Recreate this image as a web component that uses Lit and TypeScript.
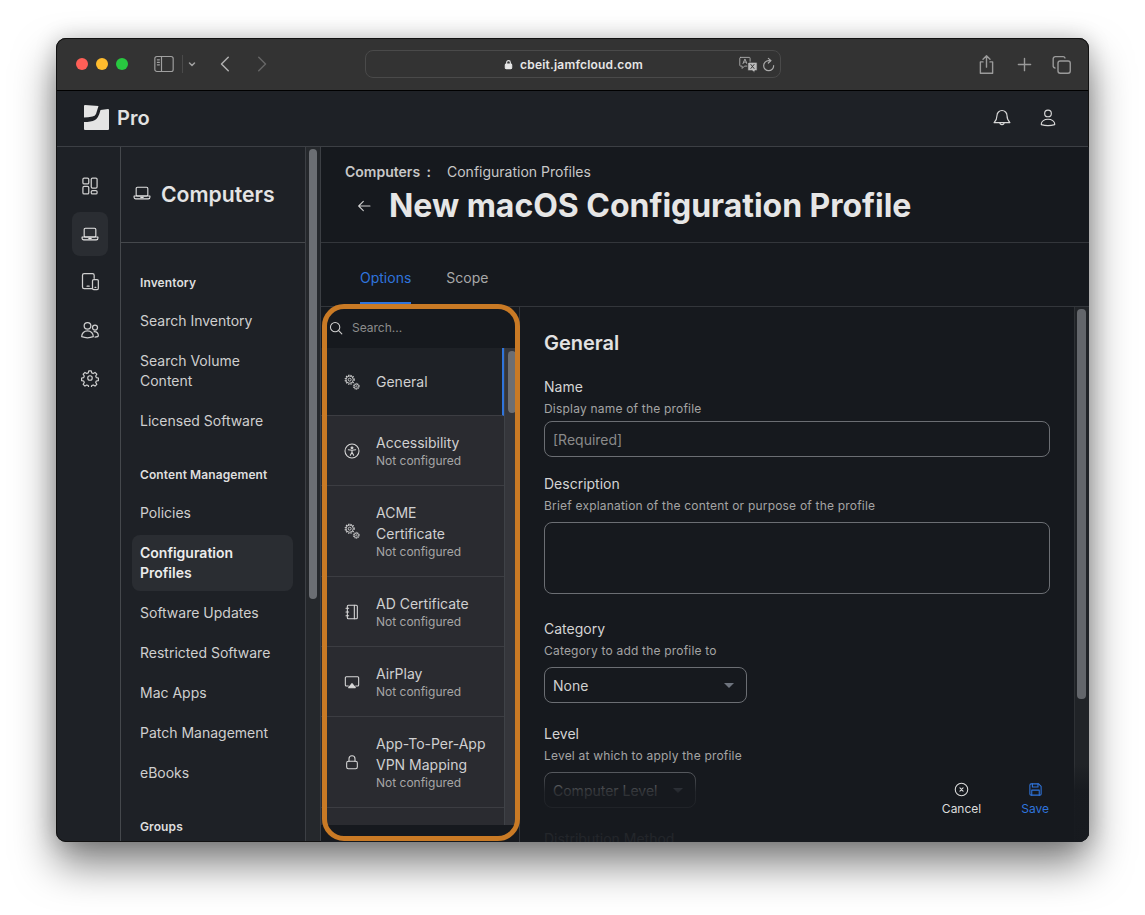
import { LitElement, html, css, svg } from "lit";
import { customElement } from "lit/decorators.js";

const ic = (body: unknown, size = 20, vb = 24, sw = 1.5) =>
  html`<svg width=${size} height=${size} viewBox="0 0 ${vb} ${vb}" fill="none" stroke="currentColor" stroke-width=${sw} stroke-linecap="round" stroke-linejoin="round">${body}</svg>`;

const laptop = svg`<rect x="5" y="5" width="14" height="10.5" rx="1.5"/><path d="M2.5 15.5h19v1.5a2 2 0 0 1-2 2h-15a2 2 0 0 1-2-2z"/><path d="M10.5 17.2h3"/>`;
const gears = svg`<g stroke-linecap="butt"><circle cx="8.500" cy="8.500" r="6.800" stroke-dasharray="2 1.600" stroke-width="1.600"/><circle cx="8.500" cy="8.500" r="5.400" stroke-width="1.300"/><circle cx="8.500" cy="8.500" r="2.200" stroke-width="1.300"/><circle cx="18.500" cy="18.500" r="4.500" stroke-dasharray="1.600 1.200" stroke-width="1.400"/><circle cx="18.500" cy="18.500" r="3.300" stroke-width="1.200"/><circle cx="18.500" cy="18.500" r="1" stroke-width="1"/></g>`;
const access = svg`<circle cx="12" cy="12" r="10.500"/><circle cx="12" cy="7.3" r="1.4" fill="currentColor"/><path d="M6.500 10l5.500 1 5.500-1M12 11v3l-2.500 4.500M12 14l2.500 4.500"/>`;
const book = svg`<rect x="5" y="2" width="15" height="20" rx="1.5"/><path d="M15.500 2v20M3 6.500h4M3 12h4M3 17.500h4"/>`;
const airplay = svg`<path d="M6.500 18H3.500A1.500 1.500 0 0 1 2 16.500v-11A1.500 1.500 0 0 1 3.500 4h17A1.500 1.500 0 0 1 22 5.500v11a1.500 1.500 0 0 1-1.500 1.500h-3"/><path d="M12 14.500l5 6H7z" fill="currentColor"/>`;
const lock = svg`<rect x="4" y="11" width="16" height="11" rx="2.500"/><path d="M7.500 11V7a4.500 4.500 0 0 1 9 0v4"/>`;

const groups: [string, string[]][] = [
  ["Inventory", ["Search Inventory", "Search Volume Content", "Licensed Software"]],
  ["Content Management", ["Policies", "Configuration Profiles", "Software Updates", "Restricted Software", "Mac Apps", "Patch Management", "eBooks"]],
  ["Groups", []],
];

const rows: [string, unknown, boolean][] = [
  ["General", gears, false],
  ["Accessibility", access, true],
  ["ACME Certificate", gears, true],
  ["AD Certificate", book, true],
  ["AirPlay", airplay, true],
  ["App-To-Per-App VPN Mapping", lock, true],
  ["", null, false],
];

@customElement("app-root")
export class AppRoot extends LitElement {
  static styles = css`
    :host { display: block; width: 1145px; height: 915px; background: #fff; overflow: hidden; font-family: Inter, "Noto Sans", sans-serif; position: relative; }
    .page { padding: 38px 0 0 56px; }
    .win { width: 1033px; height: 804px; border-radius: 10px; overflow: hidden; box-shadow: 0 22px 42px rgba(0,0,0,.5), 0 0 22px rgba(0,0,0,.18); background: #1e2126; display: flex; flex-direction: column; position: relative; outline: 1px solid #111; outline-offset: -1px; }
    svg { display: block; flex: none; }

    .titlebar { height: 52px; flex: none; background: #333333; border-bottom: 1px solid #000; display: flex; align-items: center; padding-left: 20px; color: #a0a0a0; box-sizing: content-box; }
    .light { width: 12px; height: 12px; border-radius: 50%; margin-right: 8px; }
    .r { background: #fe5f57; } .y { background: #febc2e; } .g { background: #28c840; margin-right: 0; }
    .sb { margin-left: 26px; }
    .vline { width: 1px; height: 18px; background: #4a4a4a; margin: 0 3px 0 8px; }
    .nav-back { margin-left: 19px; color: #b0b0b0; }
    .nav-fwd { margin-left: 17px; color: #666; }
    .url { margin-left: 95px; width: 416px; height: 28px; border: 1px solid #4a4a4a; border-radius: 8px; display: flex; align-items: center; position: relative; justify-content: center; color: #e6e6e6; font-size: 12px; font-weight: 600; gap: 4px; box-sizing: border-box; }
    .url span { margin-left: 2px; letter-spacing: .2px; }
    .url-right { position: absolute; right: 3px; top: 4px; display: flex; gap: 3px; align-items: center; color: #aaa; }
    .tb-right { margin-left: 195px; display: flex; align-items: center; gap: 16.500px; color: #9a9a9a; }

    .apphead { height: 53px; padding: 0 31px 2px 28px; flex: none; background: #1e2126; border-bottom: 1px solid #3c3f44; display: flex; align-items: center; color: #e4e4e4; }
    .pro { font-size: 20px; font-weight: 600; margin-left: 8px; color: #e2e2e2; }
    .spacer { flex: 1; }
    .hicons { display: flex; gap: 26px; color: #d8d8d8; }

    .body { flex: 1; min-height: 0; display: flex; }
    .rail { width: 60px; padding: 17px 0 0 4px; flex: none; border-right: 1px solid #45484c; display: flex; flex-direction: column; align-items: center; gap: 12px; box-sizing: content-box; color: #cfcfcf; }
    .rail-i { width: 36px; height: 44px; display: flex; align-items: center; justify-content: center; border-radius: 8px; margin-top: -8px; }
    .rail-i:first-child { margin-top: 0; }
    .rail-i.on { background: #2a2d32; color: #e8e8e8; }

    .side { width: 184px; flex: none; overflow: hidden; border-right: 1px solid #3c3f44; }
    .side-head { height: 96px; border-bottom: 1px solid #45484c; display: flex; align-items: flex-start; padding: 35px 0 0 11px; box-sizing: border-box; gap: 9px; color: #e4e4e4; font-size: 21.200px; font-weight: 600; line-height: 24px; }
    .side-head svg { margin-top: 1px; }
    .side-list { padding: 30px 12px 0 11px; }
    .gtitle { font-size: 12px; font-weight: 600; line-height: 20px; color: #dedede; padding-left: 8px; margin-bottom: 10px; margin-top: 26px; letter-spacing: .1px; }
    .gtitle:first-child { margin-top: 0; }
    .item { font-size: 14px; line-height: 20px; color: #cfcfcf; padding: 8px; border-radius: 8px; margin-bottom: 4px; width: 145px; }
    .item.on { background: #2a2d32; color: #ececec; font-weight: 600; }
    .side-track { width: 15px; flex: none; background: #25282c; border-right: 1px solid #3c3f44; padding: 2px 3px 0; box-sizing: border-box; }
    .side-thumb { height: 450px; background: #6b6e73; border-radius: 4px; width: 8px; }

    .main { flex: 1; min-width: 0; background: #16191e; display: flex; flex-direction: column; position: relative; overflow: hidden; }
    .mhead { height: 96px; flex: none; border-bottom: 1px solid #33363b; box-sizing: border-box; padding: 15px 0 0 24px; }
    .crumb { display: flex; font-size: 14px; line-height: 20px; color: #c8c8c8; }
    .crumb b { font-weight: 600; width: 102px; word-spacing: 3px; }
    .tline { display: flex; align-items: center; margin-top: 4px; }
    .tline svg { margin-left: 11px; color: #cfcfcf; }
    h1 { margin: 0 0 0 17px; font-size: 32px; line-height: 40px; font-weight: 700; color: #e6e6e6; letter-spacing: -.03px; }
    .tabs { height: 64px; flex: none; border-bottom: 1px solid #33363b; box-sizing: border-box; display: flex; padding-left: 39px; gap: 35px; font-size: 14px; }
    .tab { padding-top: 25px; line-height: 20px; color: #a8a8a8; height: 61px; box-sizing: border-box; }
    .tab.on { color: #2f74dc; border-bottom: 2px solid #2f74dc; }
    .cols { flex: 1; min-height: 0; display: flex; }
    .panel { width: 198px; flex: none; border-right: 1px solid #33363b; display: flex; flex-direction: column; box-sizing: content-box; }
    .search { height: 41px; flex: none; display: flex; align-items: center; padding-left: 8px; gap: 9px; font-size: 12px; color: #8c8c8c; }
    .search svg { color: #d0d0d0; }
    .plist { flex: none; height: 477px; display: flex; overflow: hidden; }
    .rows { width: 183px; flex: none; border-right: 1px solid #3f4247; box-sizing: content-box; }
    .row { display: flex; align-items: center; background: #2a2b30; border-bottom: 1px solid #3c3d42; color: #d0d0d0; box-sizing: border-box; padding: 0 15px 0 23px; min-height: 70px; }
    .row.active { background: #1e2126; min-height: 68px; border-right: 2px solid #2f74dc; }
    .row svg { color: #d8d8d8; margin-right: 16px; }
    .row.tall { min-height: 91px; }
    .name { font-size: 14px; line-height: 21px; }
    .sub { font-size: 12px; line-height: 16px; color: #a6a6a6; }
    .ptrack { width: 14px; background: #35363b; padding: 3px 3px; box-sizing: border-box; flex: none; }
    .pthumb { width: 8px; height: 62px; background: #6d6e72; border-radius: 4px; }

    .form { flex: 1; min-width: 0; padding: 24px 0 0 24px; position: relative; }
    .form h2 { margin: 0; font-size: 20px; line-height: 24px; font-weight: 600; color: #e2e2e2; }
    .label { font-size: 14px; line-height: 20px; color: #d4d4d4; }
    .help { font-size: 12px; line-height: 16px; color: #a4a4a4; margin-top: 4px; letter-spacing: .2px; }
    .l0 { margin-top: 22px; }
    .box { border: 1px solid #6b6e73; border-radius: 8px; box-sizing: border-box; font-size: 14px; color: #8a8a8a; display: flex; align-items: center; padding: 0 8px; }
    .input { width: 506px; height: 36px; margin-top: 4px; }
    .area { width: 506px; height: 72px; margin-top: 8px; }
    .sel { margin-top: 8px; height: 36px; width: 203px; color: #d0d0d0; justify-content: space-between; padding-right: 12px; }
    .l2 { margin-top: 25px; }
    .l3 { margin-top: 17px; }
    .l5 { margin-top: 21px; }
    .sel2 { width: 152px; }
    .l4 { margin-top: 21px; }
    .caret { width: 0; height: 0; border-left: 5px solid transparent; border-right: 5px solid transparent; border-top: 5px solid #6e747e; }
    .mtrack { position: absolute; right: 0; top: 0; bottom: 0; width: 15px; border-left: 1px solid #2e3135; background: #202327; padding: 2px; box-sizing: border-box; }
    .mthumb { width: 9px; height: 390px; background: #63666b; border-radius: 4px; }
    .fade { position: absolute; left: 1px; right: 0; bottom: 0; height: 78px; background: linear-gradient(to bottom, rgba(22,25,30,0), rgba(22,25,30,.86) 36%, rgba(22,25,30,.94)); }
    .actions { position: absolute; right: 40px; bottom: 25px; display: flex; gap: 40px; font-size: 12px; line-height: 16px; color: #dcdcdc; }
    .act { display: flex; flex-direction: column; align-items: center; gap: 4px; }
    .act.save { color: #2f74dc; }
    .frame { position: absolute; left: 1px; top: 157px; width: 198px; height: 537px; border: 5px solid #c97a25; border-radius: 22px; box-sizing: border-box; pointer-events: none; }
  `;

  render() {
    return html`<div class="page"><div class="win">
      <div class="titlebar">
        <div class="light r"></div><div class="light y"></div><div class="light g"></div>
        <div class="sb">${ic(svg`<rect x="1" y="3" width="22" height="18" rx="2.500"/><path d="M9 3v18M4 7h2.500M4 10h2.500M4 13h2.500"/>`, 20, 24, 1.400)}</div>
        <div class="vline"></div>
        ${ic(svg`<path d="M7 10l5 5 5-5"/>`, 12, 24, 3)}
        <div class="nav-back">${ic(svg`<path d="M15 3L6 12l9 9"/>`, 18, 24, 2)}</div>
        <div class="nav-fwd">${ic(svg`<path d="M9 3l9 9-9 9"/>`, 18, 24, 2)}</div>
        <div class="url">
          ${ic(svg`<rect x="5" y="11" width="14" height="10" rx="2" fill="currentColor"/><path d="M8 11V7.500a4 4 0 0 1 8 0V11"/>`, 11, 24, 2.400)}
          <span>cbeit.jamfcloud.com</span>
          <div class="url-right">
            ${ic(svg`<path d="M2 3h11a1 1 0 0 1 1 1v9a1 1 0 0 1-1 1H7l-3 3v-3H2a1 1 0 0 1-1-1V4a1 1 0 0 1 1-1z"/><path d="M5 11l2.500-6L10 11M6 9h3"/><path d="M12 9h10a1 1 0 0 1 1 1v9a1 1 0 0 1-1 1h-2v3l-3-3h-5a1 1 0 0 1-1-1v-9a1 1 0 0 1 1-1z" fill="#bbb" stroke="#333"/><path d="M15 12l4 5M19 12l-4 5" stroke="#333"/>`, 19, 24, 1.200)}
            ${ic(svg`<path d="M19 13a7.500 7.500 0 1 1-7.500-7.500H14"/><path d="M11 2l4 3.500-4 3.500"/>`, 16, 24, 1.800)}
          </div>
        </div>
        <div class="tb-right">
          ${ic(svg`<path d="M8 9H5v13h14V9h-3M12 15V2M8 6l4-4 4 4"/>`, 21, 24, 1.600)}
          ${ic(svg`<path d="M12 5v14M5 12h14"/>`, 21, 24, 1.600)}
          ${ic(svg`<rect x="8" y="8" width="14" height="14" rx="2.500"/><path d="M16 4.500A2.500 2.500 0 0 0 14 3H5a2.500 2.500 0 0 0-2.500 2.500V14A2.500 2.500 0 0 0 4.500 16"/>`, 21, 24, 1.600)}
        </div>
      </div>

      <div class="apphead">
        <svg width="25" height="25" viewBox="0 0 25 25" fill="#e4e4e4"><path d="M1 0L14.500 1L12 9Q11 11 8.500 11.500Q4 12.500 0 12.500V1Q0 0 1 0Z"/><path d="M16.500 5L24 4Q25 4 25 5V24Q25 25 24 25H1Q0 25 0 24V17Q7 17 11 15Q14.500 13 16.500 5Z"/></svg>
        <span class="pro">Pro</span>
        <div class="spacer"></div>
        <div class="hicons">
          ${ic(svg`<path d="M12 3a6 6 0 0 0-6 6c0 5-2 7-3.500 8.500h19C20 16 18 14 18 9a6 6 0 0 0-6-6z"/><path d="M9.500 17.500a2.500 2.500 0 0 0 5 0"/>`, 20, 24, 1.400)}
          ${ic(svg`<circle cx="12" cy="6.500" r="4"/><path d="M4 20v-1C4 16 7.500 13.500 12 13.500s8 2.500 8 5.500v1c-5 1.500-11 1.500-16 0z"/>`, 20, 24, 1.400)}
        </div>
      </div>

      <div class="body">
        <div class="rail">
          <div class="rail-i">${ic(svg`<rect x="3.500" y="2.500" width="7" height="7" rx="1.500"/><rect x="13.500" y="2.500" width="7" height="12" rx="1.500"/><rect x="3.500" y="12.500" width="7" height="9" rx="1.500"/><rect x="13.500" y="17.500" width="7" height="4" rx="1.500"/>`)}</div>
          <div class="rail-i on">${ic(laptop, 20, 24, 1.300)}</div>
          <div class="rail-i">${ic(svg`<path d="M14 20H5a2 2 0 0 1-2-2V4a2 2 0 0 1 2-2h10a2 2 0 0 1 2 2v3.500"/><path d="M8.500 17h2.500"/><rect x="15" y="9" width="7" height="12" rx="1.500"/><path d="M18 18.500h1"/>`)}</div>
          <div class="rail-i">${ic(svg`<circle cx="9" cy="7" r="4"/><circle cx="18" cy="9" r="3"/><path d="M2 20c0-4 3-7 7-7s7 3 7 7c-4 1.500-10 1.500-14 0z"/><path d="M17 14c3 0 5 2 5 5 0 .5-2 1.500-4 1.500"/>`)}</div>
          <div class="rail-i">${ic(svg`<circle cx="12" cy="12" r="3"/><path d="M10.300 2.500h3.400l.6 2.700 2 .9 2.400-1.500 2.400 2.400-1.500 2.400.8 2 2.800.6v3.400l-2.800.6-.8 2 1.500 2.400-2.400 2.400-2.400-1.500-2 .8-.6 2.800h-3.400l-.6-2.800-2-.8-2.400 1.500-2.400-2.400 1.500-2.400-.8-2-2.800-.6v-3.400l2.800-.6.8-2-1.500-2.400 2.400-2.400 2.400 1.500 2-.9z"/>`, 18, 24, 1.600)}</div>
        </div>
        <div class="side">
          <div class="side-head">${ic(laptop, 20, 24, 1.300)}<span>Computers</span></div>
          <div class="side-list">
            ${groups.map(([t, items]) => html`<div class="gtitle">${t}</div>${items.map(i => html`<div class="item ${i === "Configuration Profiles" ? "on" : ""}">${i}</div>`)}`)}
          </div>
        </div>
        <div class="side-track"><div class="side-thumb"></div></div>
        <div class="main">
          <div class="mhead">
            <div class="crumb"><b>Computers :</b><span>Configuration Profiles</span></div>
            <div class="tline">
              ${ic(svg`<path d="M21 12H4M11 5l-7 7 7 7"/>`, 16, 24, 1.600)}
              <h1>New macOS Configuration Profile</h1>
            </div>
          </div>
          <div class="tabs"><div class="tab on">Options</div><div class="tab">Scope</div></div>
          <div class="cols">
            <div class="panel">
              <div class="search">${ic(svg`<circle cx="10.500" cy="10.500" r="8"/><path d="M16.500 16.500L22 22"/>`, 14, 24, 1.800)}<span>Search...</span></div>
              <div class="plist">
                <div class="rows">
                  ${rows.map(([n, i, c]) => html`<div class="row ${n === "General" ? "active" : ""} ${n.length > 15 ? "tall" : ""}">
                    ${i ? ic(i, 16, 24, 1.600) : ""}
                    <div><div class="name">${n}</div>${c ? html`<div class="sub">Not configured</div>` : ""}</div>
                  </div>`)}
                </div>
                <div class="ptrack"><div class="pthumb"></div></div>
              </div>
            </div>
            <div class="form">
              <h2>General</h2>
              <div class="label l0">Name</div>
              <div class="help">Display name of the profile</div>
              <div class="box input">[Required]</div>
              <div class="label l3">Description</div>
              <div class="help">Brief explanation of the content or purpose of the profile</div>
              <div class="box area"></div>
              <div class="label l2">Category</div>
              <div class="help">Category to add the profile to</div>
              <div class="box sel"><span>None</span><span class="caret"></span></div>
              <div class="label l5">Level</div>
              <div class="help">Level at which to apply the profile</div>
              <div class="box sel sel2"><span>Computer Level</span><span class="caret"></span></div>
              <div class="label l4">Distribution Method</div>
              <div class="mtrack"><div class="mthumb"></div></div>
              <div class="fade"></div>
              <div class="actions">
                <div class="act">${ic(svg`<circle cx="12" cy="12" r="10"/><path d="M9.500 9.500l5 5M14.500 9.500l-5 5"/>`, 15, 24, 1.700)}<span>Cancel</span></div>
                <div class="act save">${ic(svg`<path d="M5 3h12l4 4v12a2 2 0 0 1-2 2H5a2 2 0 0 1-2-2V5a2 2 0 0 1 2-2z"/><path d="M7 3v5h9V3M6 21v-8h12v8"/>`, 15, 24, 1.700)}<span>Save</span></div>
              </div>
            </div>
          </div>
          <div class="frame"></div>
        </div>
      </div>
    </div></div>`;
  }
}
